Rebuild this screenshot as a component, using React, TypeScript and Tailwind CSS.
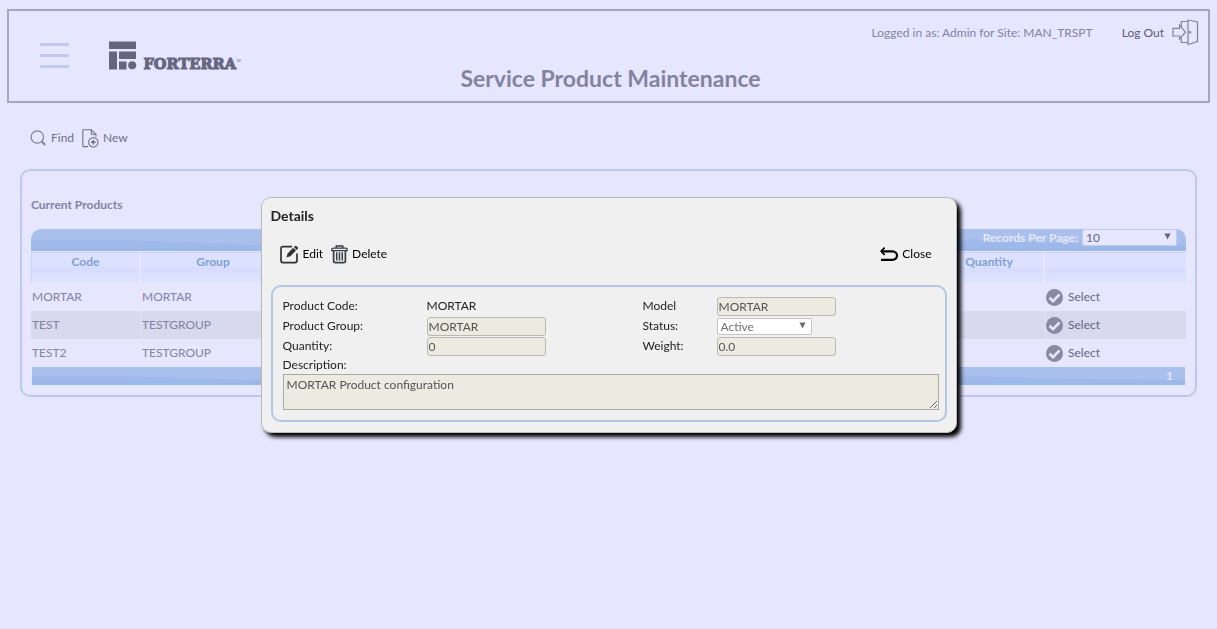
import React from "react";

type ProductRow = { code: string; group: string; shaded: boolean };

const products: ProductRow[] = [
  { code: "MORTAR", group: "MORTAR", shaded: false },
  { code: "TEST", group: "TESTGROUP", shaded: true },
  { code: "TEST2", group: "TESTGROUP", shaded: false },
];

function Wave() {
  return (
    <svg className="absolute inset-0 h-full w-full" viewBox="0 0 1155 20" preserveAspectRatio="none" aria-hidden="true">
      <defs>
        <linearGradient id="swell" x1="0" y1="0" x2="0" y2="1">
          <stop offset="0" stopColor="#a1bbea" />
          <stop offset="1" stopColor="#9bb8e9" />
        </linearGradient>
      </defs>
      <path
        d="M0 10C60 9 110 10 160 12S240 15 300 15C500 16 700 8 880 8C960 9 1010 14 1155 14V20H0Z"
        fill="url(#swell)"
      />
    </svg>
  );
}

function Arrow() {
  return (
    <svg className="pointer-events-none absolute right-[6px] top-1 h-[7px] w-[7px]" viewBox="0 0 8 8" fill="currentColor" aria-hidden="true">
      <path d="M0.5 0.5H7.5L4 7.5Z" />
    </svg>
  );
}

function Logo() {
  return (
    <svg width="136" height="32" viewBox="0 0 136 32" fill="#66667f" role="img" aria-label="Forterra">
      <rect x="1" y="1.5" width="27" height="7.5" />
      <rect x="1" y="11.5" width="8" height="18" />
      <rect x="11" y="11.5" width="17" height="7.5" />
      <rect x="11" y="21.5" width="7.5" height="8" />
      <circle cx="24.2" cy="25.3" r="4" />
      <text x="35.5" y="29" fontFamily="DejaVu Serif" fontWeight="bold" fontSize="14.6" stroke="#66667f" strokeWidth="1">
        FORTERRA
      </text>
      <text x="128.5" y="22" fontFamily="Liberation Sans" fontSize="3">
        TM
      </text>
    </svg>
  );
}

function FindIcon() {
  return (
    <svg width="17" height="17" viewBox="0 0 17 17" fill="none" stroke="#83839e" aria-hidden="true">
      <circle cx="7.3" cy="7" r="6.2" strokeWidth="1.3" />
      <path d="M11.8 11.5L15.3 15" strokeWidth="2" />
    </svg>
  );
}

function NewIcon() {
  return (
    <svg width="17" height="19" viewBox="0 0 17 19" fill="none" stroke="#6f6f8b" strokeWidth="1.1" aria-hidden="true">
      <path d="M6 17.6H1.6Q.8 17.6 .8 16.8V1.5Q.8.7 1.6.7H9.3L14 5.4V7.8" />
      <path d="M9.3.9V5.3H13.8" />
      <circle cx="11.3" cy="13.3" r="4.7" />
      <path d="M11.3 11V15.6M9 13.3H13.6" strokeWidth="1.5" />
    </svg>
  );
}

function DoorIcon() {
  return (
    <svg width="27" height="27" viewBox="0 0 27 27" fill="none" stroke="#83839f" strokeWidth="1.2" aria-hidden="true">
      <path d="M16 1L25.5 3V22.5L16 25.5Z" />
      <path d="M16 2.5H9.3V8M9.3 18.5V23.5H16" />
      <path d="M1 9.3H7.5V6.2L13.5 13.2L7.5 20V17H1Z" />
      <circle cx="18" cy="13.3" r="0.7" fill="#83839f" />
    </svg>
  );
}

function CheckIcon() {
  return (
    <svg width="17" height="17" viewBox="0 0 17 17" aria-hidden="true">
      <circle cx="8.5" cy="8.5" r="8.5" fill="#8989a3" />
      <path d="M3.5 8.8L7 12.2L13.5 5.5" fill="none" stroke="#e6e6ff" strokeWidth="2.6" />
    </svg>
  );
}

function EditIcon() {
  return (
    <svg width="19" height="19" viewBox="0 0 19 19" aria-hidden="true">
      <path d="M12 1.6H3Q1 1.6 1 3.6V15.6Q1 17.6 3 17.6H15Q17 17.6 17 15.6V8.5" fill="none" stroke="#333" strokeWidth="1.7" />
      <path d="M6.4 12.4L7.6 8.4L13.2 2.8L16 5.6L10.4 11.2Z" fill="#333" />
      <path d="M13.9 2.1L15.1.9Q15.7.4 16.3.9L17.9 2.5Q18.4 3.1 17.9 3.7L16.7 4.9Z" fill="#333" />
    </svg>
  );
}

function TrashIcon() {
  return (
    <svg width="17" height="19" viewBox="0 0 17 19" fill="none" stroke="#3a3d45" aria-hidden="true">
      <path d="M5.2 3V1H11.8V3" strokeWidth="1.4" />
      <path d="M.8 5.6V4.6Q.8 3.2 2.4 3.2H14.6Q16.2 3.2 16.2 4.6V5.6Z" strokeWidth="1.3" />
      <path d="M2.6 5.6V15.8Q2.6 17.6 4.4 17.6H12.6Q14.4 17.6 14.4 15.8V5.6" strokeWidth="1.7" />
      <path d="M5.7 7.3V15.6M8.5 7.3V15.6M11.3 7.3V15.6" strokeWidth="1.5" />
    </svg>
  );
}

function BackIcon() {
  return (
    <svg width="18" height="15" viewBox="0 0 18 15" fill="none" stroke="#000" strokeWidth="2.2" aria-hidden="true">
      <path d="M2 4.3H12.3C18.6 4.3 18.6 12.9 12.3 12.9H1" />
      <path d="M4.6 .6L1.2 4.2L4.6 7.8" strokeWidth="1.8" />
    </svg>
  );
}

const field = "h-[19px] w-[119px] rounded-[3px] border border-[#b9b9b1] bg-[#ebebe2] px-px text-[#545454]";

function DetailsDialog() {
  return (
    <div className="fixed inset-0 flex items-start justify-center pt-[197px]">
      <section
        role="dialog"
        aria-labelledby="details-title"
        className="w-[696px] rounded-[10px] border border-[#bbbbbb] bg-[#f0f0f0] px-[9px] pb-[10px] pt-2 text-[#222222] shadow-[4px_4px_4px_#000000]"
      >
        <h2 id="details-title" className="text-sm font-bold leading-5">Details</h2>
        <div className="mt-[17px] flex h-[22px] items-center gap-2 pl-[9px] pr-[15px] text-black">
          <button type="button" className="flex items-center gap-1">
            <EditIcon />
            Edit
          </button>
          <button type="button" className="flex items-center gap-1">
            <TrashIcon />
            Delete
          </button>
          <button type="button" className="ml-auto flex items-center gap-1">
            <BackIcon />
            Close
          </button>
        </div>
        <form className="mt-5 rounded-[10px] border-2 border-[#b2c8e2] px-[10px] pb-[10px] pt-[9px]">
          <div className="grid grid-cols-[144px_216px_74px_1fr] auto-rows-[20px] items-center">
            <span>Product Code:</span>
            <span>MORTAR</span>
            <label htmlFor="model">Model</label>
            <input id="model" className={field} defaultValue="MORTAR" disabled />
            <label htmlFor="group">Product Group:</label>
            <input id="group" className={field} defaultValue="MORTAR" disabled />
            <label htmlFor="status">Status:</label>
            <span className="relative h-[17px] w-[95px] text-[#707070]">
              <select
                id="status"
                disabled
                className="block h-full w-full appearance-none rounded-[2px] border border-[#c4c4c4] bg-white pl-[3px] leading-[15px] opacity-100"
              >
                <option>Active</option>
              </select>
              <Arrow />
            </span>
            <label htmlFor="quantity">Quantity:</label>
            <input id="quantity" className={field} defaultValue="0" disabled />
            <label htmlFor="weight">Weight:</label>
            <input id="weight" className={field} defaultValue="0.0" disabled />
          </div>
          <label htmlFor="description" className="block leading-[18px]">Description:</label>
          <textarea
            id="description"
            disabled
            defaultValue="MORTAR Product configuration"
            className="block h-9 w-[656px] resize border border-[#a9a9a9] bg-[#ebebe2] px-[3px] py-[2px] text-[#545454]"
          />
        </form>
      </section>
    </div>
  );
}

export default function App() {
  return (
    <div className="min-h-screen bg-[#e6e6ff] pt-[9px] font-['Lato','Liberation_Sans',sans-serif] text-xs text-[#83839f]">
      <header className="mx-[7px] grid min-h-[94px] grid-cols-[1fr_auto_1fr] border-2 border-[#a5a5c0]">
        <div className="flex items-start gap-[39px] pl-[31px] pt-[29px]">
          <button type="button" aria-label="Menu" className="mt-[3px] flex w-[29px] flex-col gap-2">
            <span className="h-[3px] bg-[#c0caf0]" />
            <span className="h-[3px] bg-[#c0caf0]" />
            <span className="h-[3px] bg-[#c0caf0]" />
          </button>
          <Logo />
        </div>
        <h1 className="pl-1 pt-[52px] text-[23px] font-bold leading-[30px]">Service Product Maintenance</h1>
        <div className="flex items-start justify-end gap-[29px] pr-[9px] pt-2">
          <span className="leading-[27px]">Logged in as: Admin for Site: MAN_TRSPT</span>
          <a href="#logout" className="flex items-center gap-2 text-[#5c5c78]">
            Log Out
            <DoorIcon />
          </a>
        </div>
      </header>

      <nav className="mt-[25px] flex h-5 items-center gap-2 pl-[30px] text-[#70708c]">
        <button type="button" className="flex items-center gap-1">
          <FindIcon />
          Find
        </button>
        <button type="button" className="flex items-center gap-1">
          <NewIcon />
          New
        </button>
      </nav>

      <main className="mx-5 mt-[21px] rounded-[10px] border-2 border-[#bcc9ee] px-[9px] pb-[10px] pt-6">
        <h2 className="font-bold leading-5">Current Products</h2>
        <div className="relative mt-[14px] flex h-[22px] items-start justify-end gap-1 overflow-hidden rounded-t-[10px] bg-[#aac0ec] pr-[9px] font-bold text-[#e6e6ff]">
          <Wave />
          <label htmlFor="records" className="relative leading-[18px]">Records Per Page:</label>
          <span className="relative h-[17px] w-[95px] font-normal text-[#66667f]">
            <select
              id="records"
              className="block h-full w-full appearance-none rounded-[2px] border border-[#c3cbec] bg-[#e6e6ff] pl-[3px] leading-[15px]"
            >
              <option>10</option>
            </select>
            <Arrow />
          </span>
        </div>
        <table className="mt-px w-full table-fixed border-separate border-spacing-0">
          <colgroup>
            <col className="w-[110px]" />
            <col className="w-[146px]" />
            <col />
            <col className="w-[110px]" />
            <col className="w-[141px]" />
          </colgroup>
          <thead>
            <tr className="h-[31px] bg-linear-to-b from-[#dbe1fe] from-50% via-[#d5dcfd] via-50% to-[#dee3fe] align-top text-[#7f9ed2]">
              <th className="border-l border-r-2 border-t border-l-[#c9d5f6] border-r-[#e6e6ff] border-t-[#c9d5f6] pt-px">Code</th>
              <th className="border-r-2 border-t border-r-[#e6e6ff] border-t-[#c9d5f6] pt-px">Group</th>
              <td className="border-t border-[#c9d5f6]" />
              <th className="border-r-2 border-t border-r-[#e6e6ff] border-t-[#c9d5f6] pt-px">Quantity</th>
              <td className="border-t border-[#c9d5f6]" />
            </tr>
          </thead>
          <tbody>
            {products.map((p) => (
              <tr key={p.code} className={p.shaded ? "h-7 bg-[#d8d8ef]" : "h-7"}>
                <td className="pl-px">{p.code}</td>
                <td className="border-l border-dotted border-[#e6e6ff]">{p.group}</td>
                <td />
                <td />
                <td className="border-l border-dotted border-[#e6e6ff]">
                  <button type="button" className="flex items-center gap-[5px] text-[#66667f]">
                    <CheckIcon />
                    Select
                  </button>
                </td>
              </tr>
            ))}
          </tbody>
        </table>
        <div className="relative mx-px flex h-[18px] items-center justify-end bg-[#aac0ec] pr-3 font-bold text-[#e6e6ff]">
          <Wave />
          <span className="relative">1</span>
        </div>
      </main>

      <DetailsDialog />
    </div>
  );
}
